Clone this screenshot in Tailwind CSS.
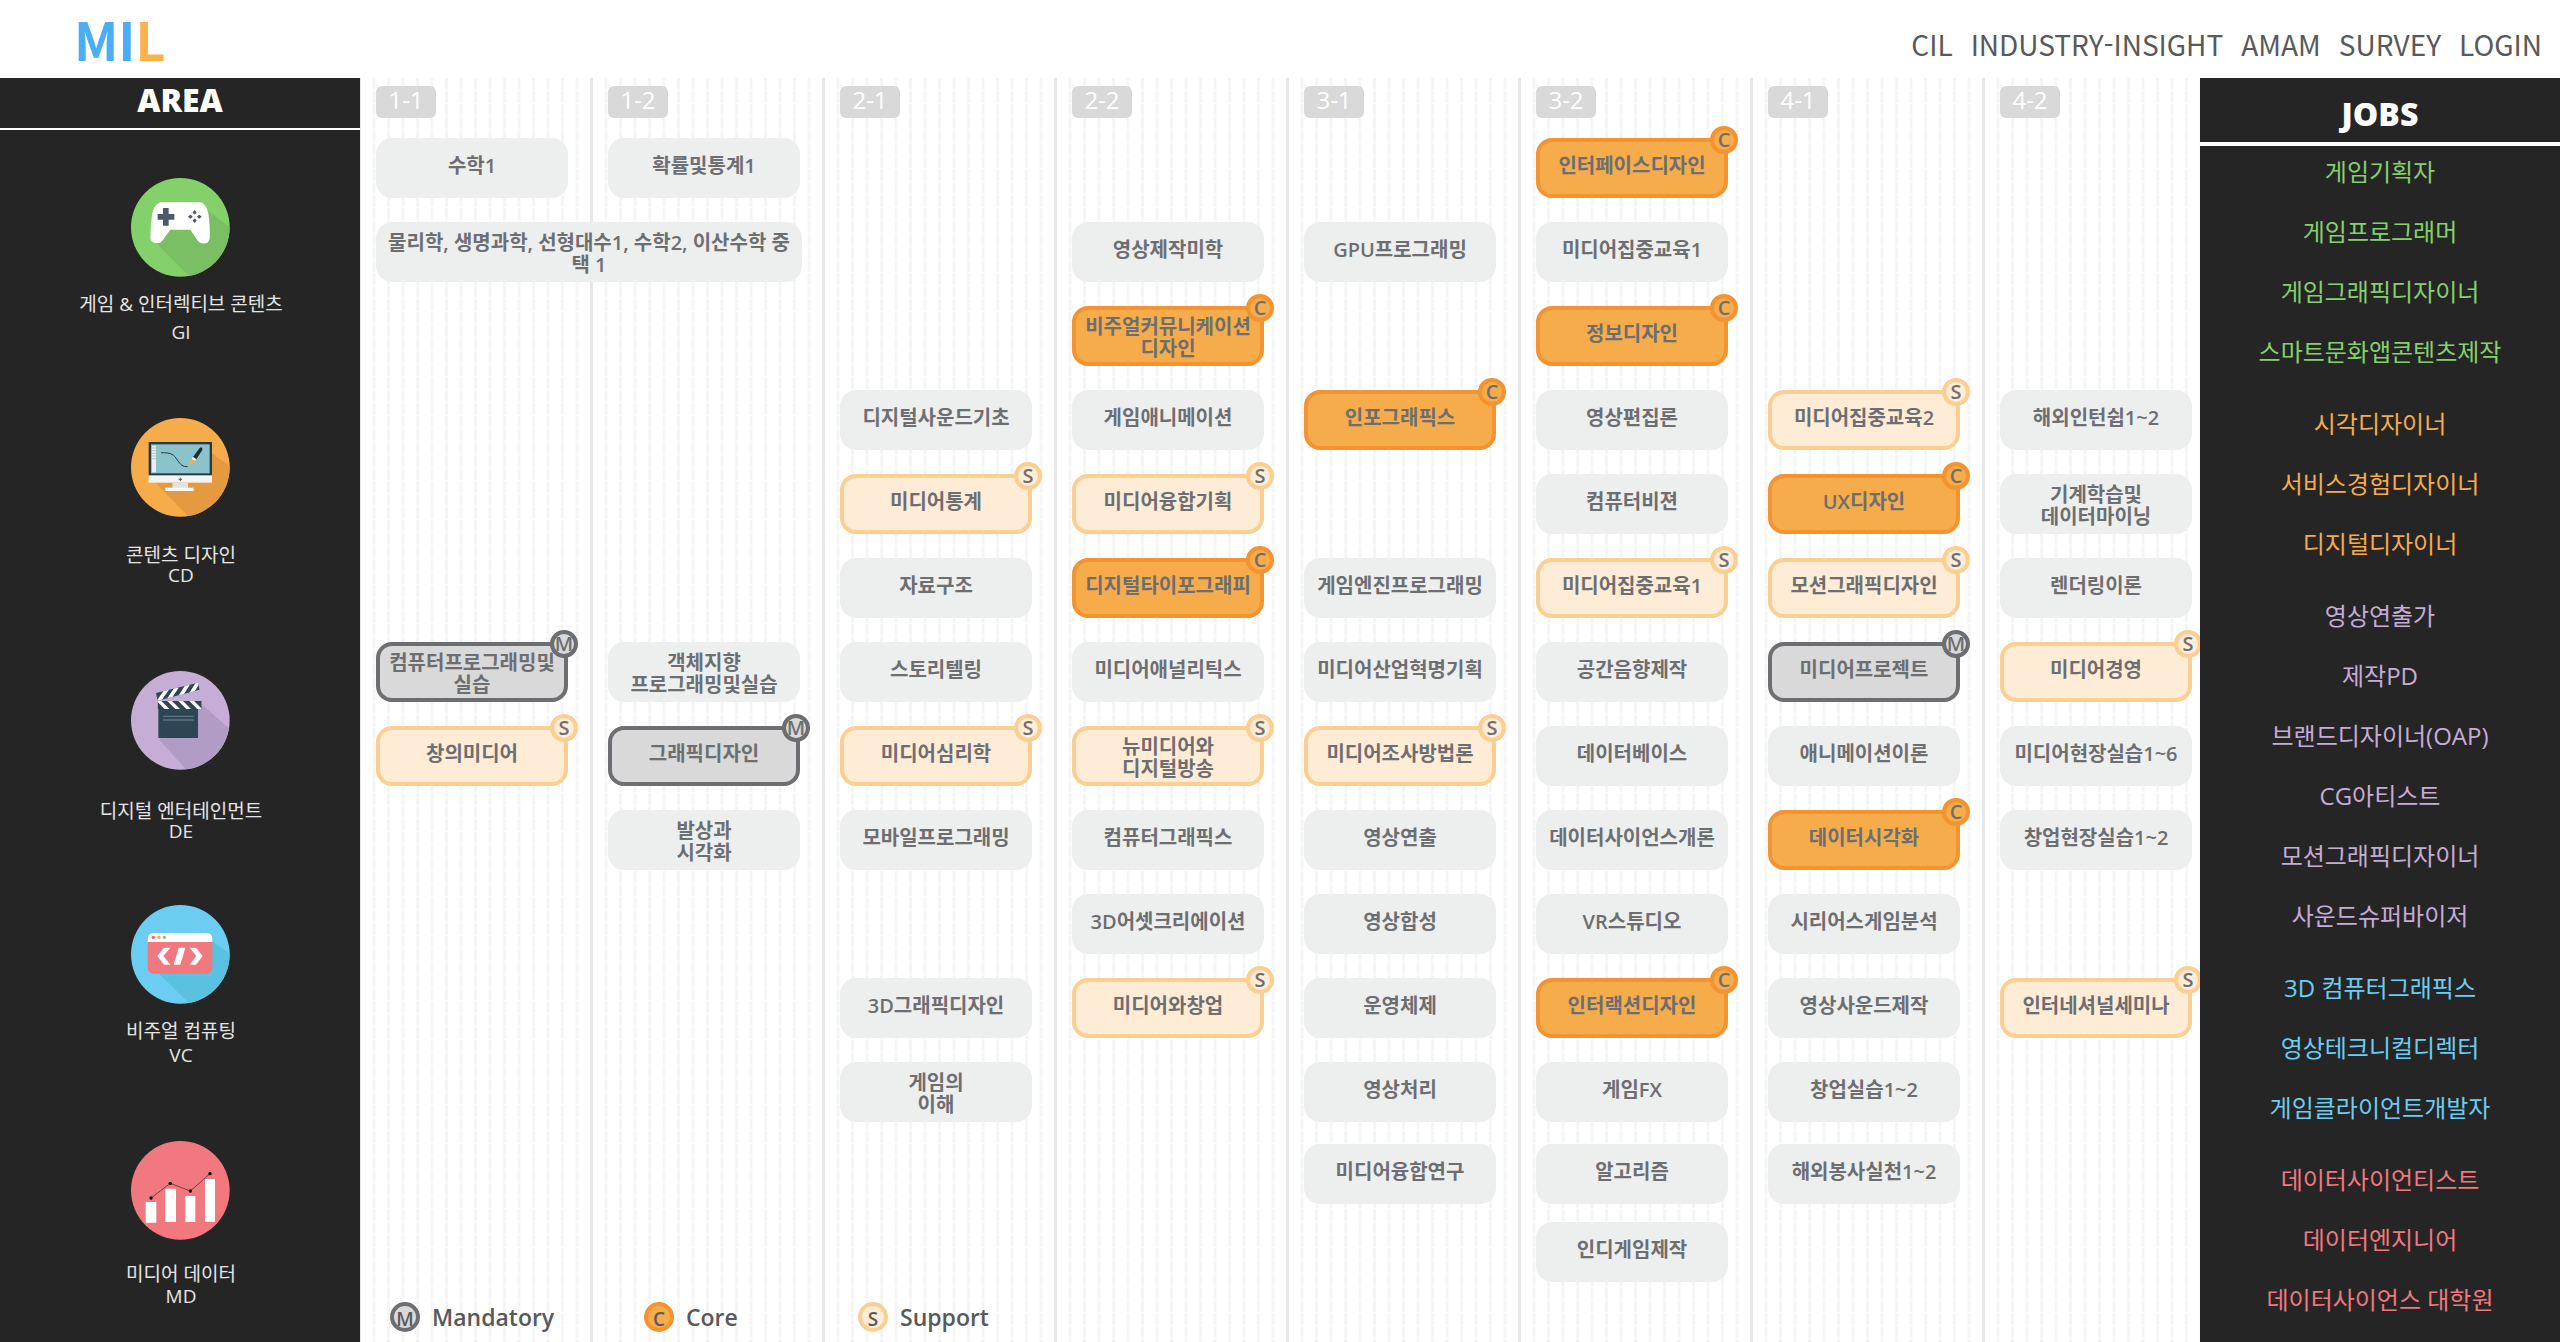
<!DOCTYPE html>
<html lang="ko">
<head>
<meta charset="utf-8">
<meta name="viewport" content="width=device-width, initial-scale=1">
<title>MIL</title>
<script src="https://cdn.jsdelivr.net/npm/@tailwindcss/browser@4"></script>
</head>
<body class="flex min-h-screen flex-col bg-white font-['Open_Sans','Noto_Sans_CJK_KR',sans-serif]">
<header class="flex h-[78px] shrink-0 items-center justify-between pr-[18px] pl-[74px] font-['Noto_Sans_CJK_KR',sans-serif]">
  <a href="#" class="text-[52px] leading-[78px] font-bold text-[#4aaef5]">MI<span class="text-[#fbb14c]">L</span></a>
  <nav class="flex gap-[18px] pt-2.5 text-[28px] leading-9 text-[#58595b]">
    <a href="#">CIL</a><a href="#">INDUSTRY-INSIGHT</a><a href="#">AMAM</a><a href="#">SURVEY</a><a href="#">LOGIN</a>
  </nav>
</header>

<div class="flex grow">
  <aside class="w-[360px] shrink-0 bg-[#252525] text-center text-[#e6e6e6]">
    <h2 class="h-[52px] border-b-2 border-white text-[32px] leading-[44px] font-extrabold text-white">AREA</h2>
    <ul class="flex flex-col items-center pt-12 pl-0.5 text-[19px] leading-5">
      <li class="flex flex-col items-center">
        <svg class="size-[99px]" viewBox="0 0 297 297" aria-hidden="true">
          <clipPath id="disc"><circle cx="148" cy="148" r="148"/></clipPath>
          <circle cx="148" cy="148" r="148" fill="#84d16c"/>
          <g clip-path="url(#disc)">
            <path d="M228 96 L300 150 V300 H180 L72 192 L120 150 Z" fill="#7bbf64"/>
            <path d="M88 73 H210 Q226 80 232 106 Q238 150 236 182 Q232 196 222 196 Q208 198 200 188 L178 155 H118 L94 188 Q86 198 74 195 Q60 194 58 180 Q58 140 64 104 Q70 80 88 73 Z" fill="#fff"/>
            <path d="M96 90 H113 V108 H130 V125 H113 V143 H96 V125 H80 V108 H96 Z" fill="#4a5c6a"/>
            <path d="M191 96 l6 7 -4 6 h-4 l-4 -6 z M191 135 l6 -7 -4 -6 h-4 l-4 6 z M171 116 l7 -6 6 4 v4 l-6 4 z M212 116 l-7 -6 -6 4 v4 l6 4 z" fill="#4a5c6a"/>
          </g>
        </svg>
        <p class="mt-[17px]">게임 &amp; 인터렉티브 콘텐츠</p>
        <p class="mt-2">GI</p>
      </li>
      <li class="mt-[76px] flex flex-col items-center">
        <svg class="size-[99px]" viewBox="0 0 297 297" aria-hidden="true">
          <circle cx="148" cy="148" r="148" fill="#f6ac4a"/>
          <g clip-path="url(#disc)">
            <path d="M242 106 L300 146 V300 H176 L72 192 Z" fill="#e59a42"/>
            <rect x="53" y="72" width="190" height="102" fill="#263a46"/>
            <rect x="60" y="79" width="176" height="87" fill="#8bc3cb"/>
            <rect x="63" y="83" width="12" height="80" fill="#e9eef0"/>
            <path d="M63 90 h12 M63 98 h12 M63 106 h12 M63 114 h12 M63 122 h12" stroke="#b6c3c8" stroke-width="3"/>
            <path d="M90 104 C124 104 128 110 139 126 C150 142 155 146 170 146" fill="none" stroke="#263a46" stroke-width="3"/>
            <path d="M206 90 Q216 84 214 96 L196 124 L186 117 Z" fill="#1d2c36"/>
            <path d="M186 117 l10 7 l-4 5 l-10 -7 z" fill="#f1f1f1"/>
            <path d="M181 123 l11 7 q-4 12 -19 9 q5 -5 8 -16 z" fill="#f6ac4a"/>
            <rect x="53" y="172" width="190" height="22" fill="#f5f4f5"/>
            <path d="M148 179 v10 M143 184 h10" stroke="#4a5c6a" stroke-width="3"/>
            <rect x="124" y="194" width="47" height="16" fill="#e2e2e2"/>
            <rect x="103" y="209" width="85" height="10" fill="#f9f9f9"/>
          </g>
        </svg>
        <p class="mt-7">콘텐츠 디자인</p>
        <p>CD</p>
      </li>
      <li class="mt-[86px] flex flex-col items-center">
        <svg class="size-[99px]" viewBox="0 0 297 297" aria-hidden="true">
          <circle cx="148" cy="148" r="148" fill="#c5add5"/>
          <g clip-path="url(#disc)">
            <path d="M212 100 L300 178 V300 H170 L84 206 Z" fill="#b19cc5"/>
            <clipPath id="clap-top"><path d="M75 66 L201 35 L206 56 L80 89 Z"/></clipPath>
            <clipPath id="clap-bottom"><rect x="80" y="90" width="132" height="24"/></clipPath>
            <g clip-path="url(#clap-top)">
              <rect x="70" y="30" width="140" height="62" fill="#2c4656"/>
              <path d="M82 92 L110 52 M114 84 L138 48 M148 76 L172 38 M180 68 L204 30" stroke="#fff" stroke-width="11"/>
            </g>
            <rect x="82" y="112" width="119" height="89" fill="#2c4656"/>
            <g clip-path="url(#clap-bottom)">
              <rect x="80" y="90" width="132" height="24" fill="#2c4656"/>
              <path d="M80 86 L112 118 M112 86 L144 118 M145 86 L177 118 M178 86 L210 118" stroke="#fff" stroke-width="10"/>
            </g>
            <path d="M96 136 H188 M96 147 H188" stroke="#5d7480" stroke-width="4"/>
          </g>
        </svg>
        <p class="mt-[31px]">디지털 엔터테인먼트</p>
        <p>DE</p>
      </li>
      <li class="mt-16 flex flex-col items-center">
        <svg class="size-[99px]" viewBox="0 0 297 297" aria-hidden="true">
          <circle cx="148" cy="148" r="148" fill="#6bcdf2"/>
          <g clip-path="url(#disc)">
            <path d="M243 108 L300 148 V300 H180 L84 206 Z" fill="#5bc1e0"/>
            <rect x="50" y="84" width="194" height="122" rx="18" fill="#f1787f"/>
            <path d="M50 111 V102 Q50 84 68 84 H226 Q244 84 244 102 V111 Z" fill="#fff"/>
            <circle cx="67" cy="97" r="5" fill="#f0616a"/><circle cx="84" cy="97" r="5" fill="#f6ac4a"/><circle cx="100" cy="97" r="5" fill="#7bc96a"/>
            <path d="M99 128 H118 L97 153 L118 179 H99 L79 153 Z M143 128 H163 L148 179 H128 Z M176 128 H195 L215 153 L195 179 H176 L196 153 Z" fill="#fff"/>
          </g>
        </svg>
        <p class="mt-[17px]">비주얼 컴퓨팅</p>
        <p class="mt-1">VC</p>
      </li>
      <li class="mt-[76px] flex flex-col items-center">
        <svg class="size-[99px]" viewBox="0 0 297 297" aria-hidden="true">
          <circle cx="148" cy="148" r="148" fill="#f1787f"/>
          <path d="M44 183 H76 V245 H44 Z M103 143 H135 V243 H103 Z M163 165 H193 V243 H163 Z M222 114 H252 V242 H222 Z" fill="#fff"/>
          <path d="M60 171 L118 127 L178 150 L237 98" fill="none" stroke="#46191c" stroke-width="2"/>
          <circle cx="60" cy="171" r="5"/><circle cx="118" cy="127" r="5"/><circle cx="178" cy="150" r="5"/><circle cx="237" cy="98" r="5"/>
        </svg>
        <p class="mt-6">미디어 데이터</p>
        <p class="mt-0.5">MD</p>
      </li>
    </ul>
  </aside>

  <main class="min-w-0 grow overflow-hidden">
    <div id="curriculum" class="grid h-full w-[calc(100%+16px)] grid-cols-8 grid-rows-[60px_repeat(11,84px)_82px_78px_80px_40px] bg-[linear-gradient(to_right,transparent_calc(100%-3px),#e8e8e8_0),linear-gradient(to_bottom,transparent_12px,#ffffff_0),linear-gradient(to_right,transparent_calc(100%-3px),#f5f5f5_0)] bg-[length:12.5%_100%,100%_13px,0.78125%_100%] bg-position-[1px_0]">
      <ul class="col-span-8 row-start-16 flex text-[23px] leading-[30px] font-semibold text-[#58595b]">
        <li class="flex w-[284px] gap-3 pl-[30px]"><span class="size-[30px] rounded-full border-4 border-[#6d6e71] bg-[#d9d9d9] text-center text-[19px] leading-[26px] font-semibold">M</span>Mandatory</li>
        <li class="flex w-[214px] gap-3"><span class="size-[30px] rounded-full border-4 border-[#f39331] bg-[#f6ac4a] text-center text-[19px] leading-[26px] font-semibold">C</span>Core</li>
        <li class="flex gap-3"><span class="size-[30px] rounded-full border-4 border-[#fbcf91] bg-[#feecd6] text-center text-[19px] leading-[26px] font-semibold">S</span>Support</li>
      </ul>
    </div>
  </main>

  <aside class="w-[360px] shrink-0 bg-[#252525] text-center">
    <h2 class="h-[68px] border-b-4 border-white text-[32px] leading-[72px] font-extrabold text-white">JOBS</h2>
    <div class="flex flex-col gap-5 text-[24px] leading-[52px]">
      <ul class="flex flex-col gap-2 text-[#84d16c]"><li>게임기획자</li><li>게임프로그래머</li><li>게임그래픽디자이너</li><li>스마트문화앱콘텐츠제작</li></ul>
      <ul class="flex flex-col gap-2 text-[#f6ac4a]"><li>시각디자이너</li><li>서비스경험디자이너</li><li>디지털디자이너</li></ul>
      <ul class="flex flex-col gap-2 text-[#c5add5]"><li>영상연출가</li><li>제작PD</li><li>브랜드디자이너(OAP)</li><li>CG아티스트</li><li>모션그래픽디자이너</li><li>사운드슈퍼바이저</li></ul>
      <ul class="flex flex-col gap-2 text-[#6bcdf2]"><li>3D 컴퓨터그래픽스</li><li>영상테크니컬디렉터</li><li>게임클라이언트개발자</li></ul>
      <ul class="flex flex-col gap-2 text-[#f1787f]"><li>데이터사이언티스트</li><li>데이터엔지니어</li><li>데이터사이언스 대학원</li></ul>
    </div>
  </aside>
</div>

<script>
// Each semester lists its courses as [row, name, kind]; kind is M(andatory), C(ore), S(upport) or absent.
const semesters = {
  '1-1': [[1,'수학1'],[7,'컴퓨터프로그래밍및\n실습','M'],[8,'창의미디어','S']],
  '1-2': [[1,'확률및통계1'],[7,'객체지향\n프로그래밍및실습'],[8,'그래픽디자인','M'],[9,'발상과\n시각화']],
  '2-1': [[4,'디지털사운드기초'],[5,'미디어통계','S'],[6,'자료구조'],[7,'스토리텔링'],[8,'미디어심리학','S'],[9,'모바일프로그래밍'],[11,'3D그래픽디자인'],[12,'게임의\n이해']],
  '2-2': [[2,'영상제작미학'],[3,'비주얼커뮤니케이션\n디자인','C'],[4,'게임애니메이션'],[5,'미디어융합기획','S'],[6,'디지털타이포그래피','C'],[7,'미디어애널리틱스'],[8,'뉴미디어와\n디지털방송','S'],[9,'컴퓨터그래픽스'],[10,'3D어셋크리에이션'],[11,'미디어와창업','S']],
  '3-1': [[2,'GPU프로그래밍'],[4,'인포그래픽스','C'],[6,'게임엔진프로그래밍'],[7,'미디어산업혁명기획'],[8,'미디어조사방법론','S'],[9,'영상연출'],[10,'영상합성'],[11,'운영체제'],[12,'영상처리'],[13,'미디어융합연구']],
  '3-2': [[1,'인터페이스디자인','C'],[2,'미디어집중교육1'],[3,'정보디자인','C'],[4,'영상편집론'],[5,'컴퓨터비젼'],[6,'미디어집중교육1','S'],[7,'공간음향제작'],[8,'데이터베이스'],[9,'데이터사이언스개론'],[10,'VR스튜디오'],[11,'인터랙션디자인','C'],[12,'게임FX'],[13,'알고리즘'],[14,'인디게임제작']],
  '4-1': [[4,'미디어집중교육2','S'],[5,'UX디자인','C'],[6,'모션그래픽디자인','S'],[7,'미디어프로젝트','M'],[8,'애니메이션이론'],[9,'데이터시각화','C'],[10,'시리어스게임분석'],[11,'영상사운드제작'],[12,'창업실습1~2'],[13,'해외봉사실천1~2']],
  '4-2': [[4,'해외인턴쉽1~2'],[5,'기계학습및\n데이터마이닝'],[6,'렌더링이론'],[7,'미디어경영','S'],[8,'미디어현장실습1~6'],[9,'창업현장실습1~2'],[11,'인터네셔널세미나','S']],
};
const kinds = {
  M: 'border-[#6d6e71] bg-[#d9d9d9]',
  C: 'border-[#f39331] bg-[#f6ac4a]',
  S: 'border-[#fbcf91] bg-[#feecd6]',
};
const plain = 'border-[#edefee] bg-[#edefee]';
const grid = document.getElementById('curriculum');

function course(column, span, row, name, kind) {
  const colours = kinds[kind] || plain;
  const badge = kind ? `<span class="absolute -top-4 -right-[14px] size-7 rounded-full border-4 text-[20px] leading-5 ${colours}">${kind}</span>` : '';
  const lift = name.includes('\n') ? 'pt-1' : 'pb-1';
  grid.insertAdjacentHTML('beforeend',
    `<div class="relative ml-4 ${span > 1 ? 'mr-[22px]' : 'mr-6'} ${lift} flex h-[60px] items-center justify-center rounded-2xl border-4 text-center text-[20px] leading-[22px] font-semibold whitespace-pre text-[#6d6e71] ${colours}" style="grid-column:${column}/span ${span};grid-row:${row + 1}">${name}${badge}</div>`);
}

Object.entries(semesters).forEach(([label, courses], i) => {
  grid.insertAdjacentHTML('beforeend',
    `<h3 class="mt-2 ml-4 h-8 w-[60px] rounded-md bg-[#d9d9d9] text-center text-[24px] leading-7 text-white" style="grid-column:${i + 1};grid-row:1">${label}</h3>`);
  courses.forEach(([row, name, kind]) => course(i + 1, 1, row, name, kind));
});
course(1, 2, 2, '물리학, 생명과학, 선형대수1, 수학2, 이산수학 중\n택 1');
</script>
</body>
</html>
